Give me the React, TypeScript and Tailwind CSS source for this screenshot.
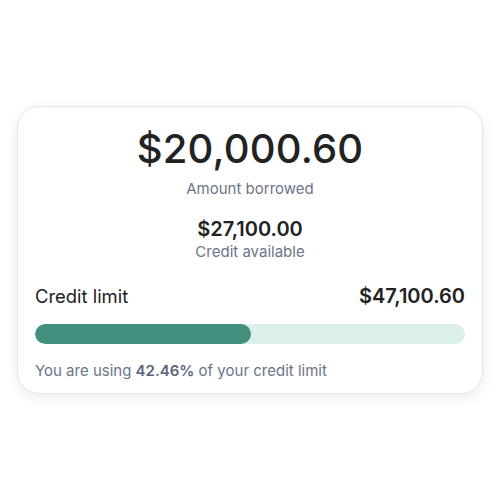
import React from "react";

export default function App() {
  return (
    <div className="w-[500px] h-[500px] bg-white flex items-center justify-center font-['Inter',sans-serif]">
      <div className="w-[466px] h-[288px] bg-white rounded-[22px] border border-[#e6e6e6] shadow-[0_4px_14px_rgba(0,0,0,0.08)] px-[17px] pt-[18px] flex flex-col">
        <div className="flex flex-col items-center">
          <div className="text-[40px] leading-[48px] font-medium text-[#222222] tracking-[0.2px]">$20,000.60</div>
          <div className="mt-[7px] text-[15px] leading-[18px] text-[#6b7489]">Amount borrowed</div>
          <div className="mt-[20px] text-[20px] leading-[22px] font-semibold text-[#222222]">$27,100.00</div>
          <div className="mt-[3px] text-[15px] leading-[18px] text-[#6b7489]">Credit available</div>
        </div>
        <div className="mt-[24px] flex items-center justify-between">
          <span className="text-[18.4px] leading-[22px] text-[#222222]">Credit limit</span>
          <span className="text-[20px] leading-[22px] font-semibold text-[#222222]">$47,100.60</span>
        </div>
        <div className="mt-[17px] h-[20px] rounded-full bg-[#dbf0eb] overflow-hidden">
          <div className="h-full w-[50.3%] rounded-full bg-[#43907e]" />
        </div>
        <div className="mt-[18px] text-[15px] leading-[18px] text-[#6b7489]">
          You are using <span className="font-semibold text-[#5a6377]">42.46%</span> of your credit limit
        </div>
      </div>
    </div>
  );
}
